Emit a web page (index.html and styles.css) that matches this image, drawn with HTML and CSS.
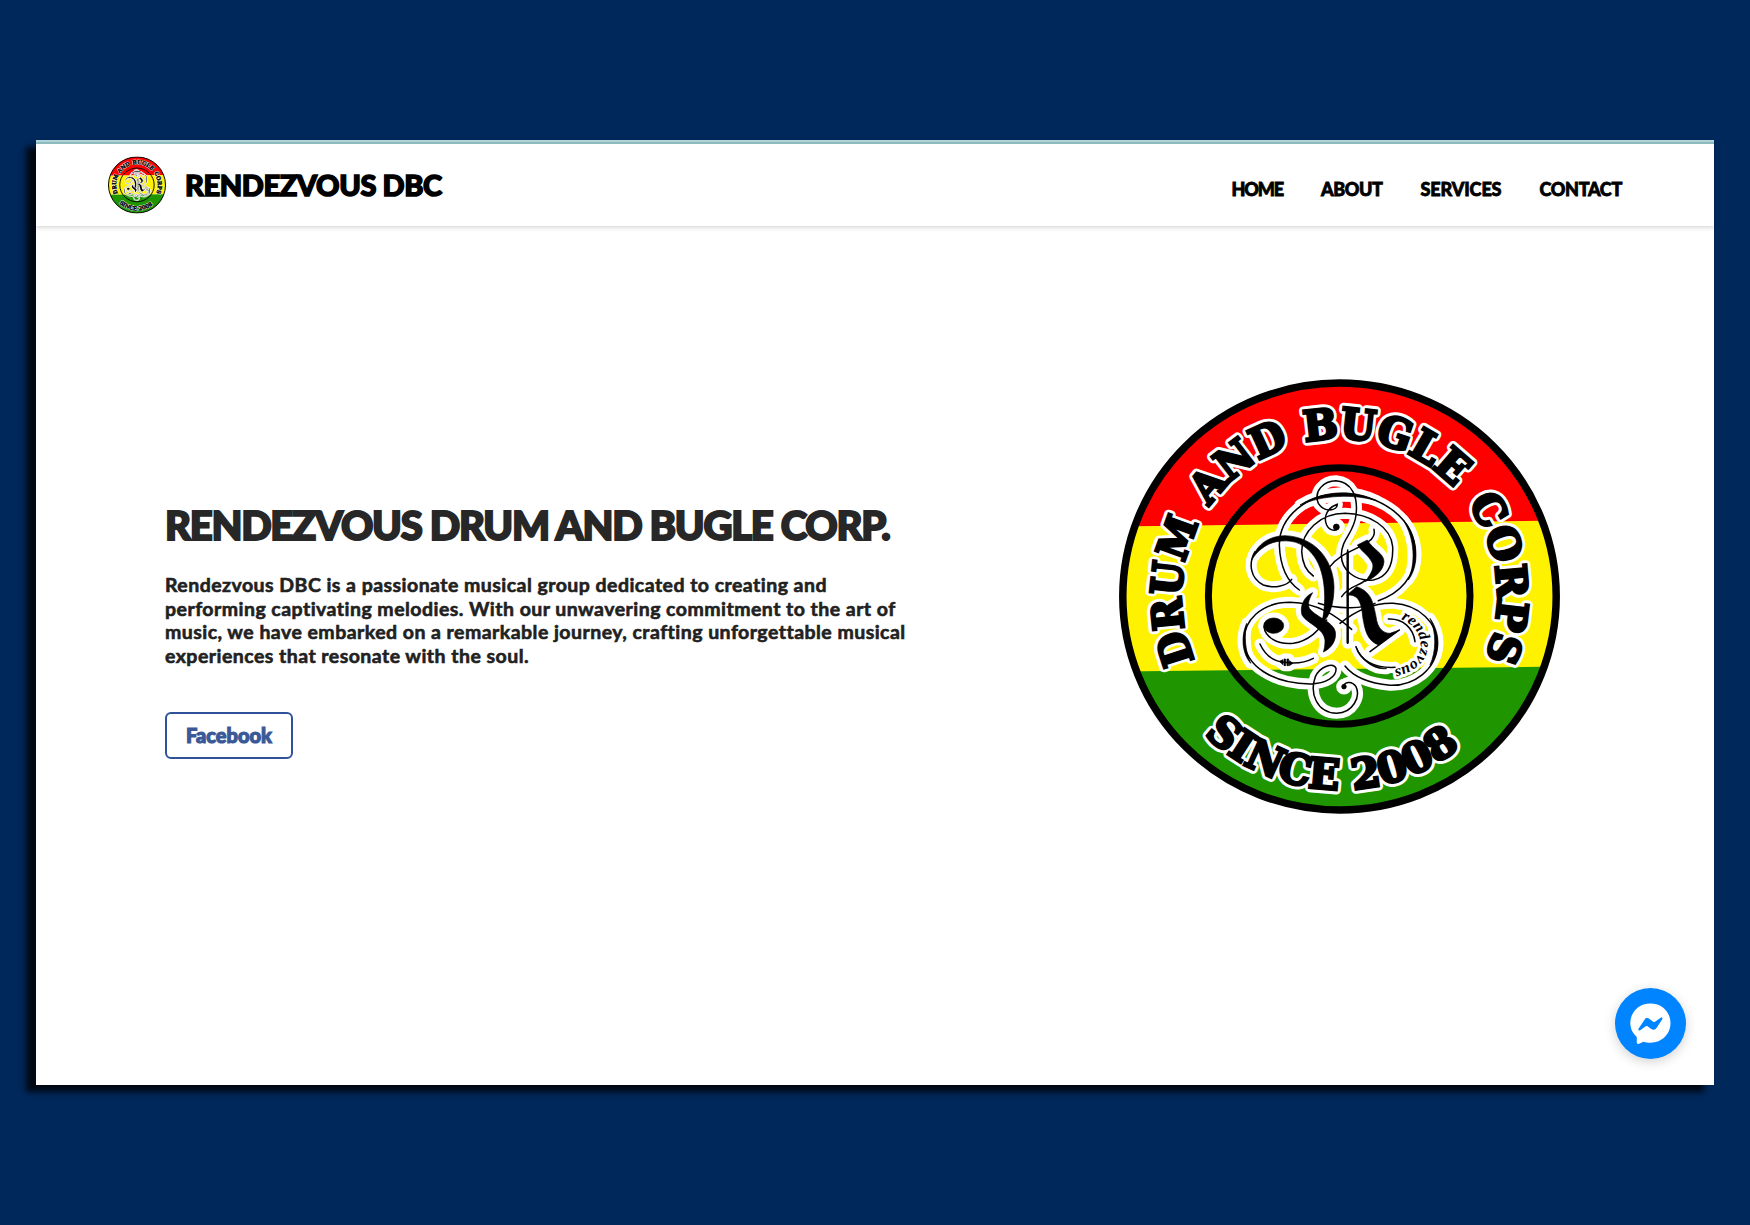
FILE: index.html
```html
<!DOCTYPE html>
<html lang="en">
<head>
<meta charset="utf-8">
<title>Rendezvous DBC</title>
<link rel="stylesheet" href="styles.css">
</head>
<body>
<svg class="defs" aria-hidden="true">
  <defs>
    <g id="lines">
      <path d="M322 166 C330 186 300 186 290 165 C278 138 295 112 322 103 C322 122 285 130 265 100 C250 65 280 32 318 32 C365 35 385 80 378 135 C372 190 335 205 334 255 C334 300 375 335 430 330 C475 320 490 280 488 230 C482 170 420 132 345 130 C270 130 215 185 215 245 C217 280 230 305 250 318"/>
      <path d="M208 360 C165 330 150 280 148 225 C148 140 230 72 330 72 C460 72 556 150 556 250 C556 320 510 370 445 392"/>
      <path d="M185 328 C170 350 130 355 100 345 C60 325 55 280 75 245"/>
      <path d="M102 470 C105 500 140 525 190 520 C240 512 265 480 290 450"/>
      <path d="M365 478 C320 440 270 400 180 397 C90 397 42 455 42 510 C45 590 130 640 240 642 C290 640 320 620 318 595 C310 575 270 590 256 620 C238 670 260 728 320 730 C370 728 392 680 378 650 C365 630 340 635 340 655"/>
      <path d="M330 460 C380 420 430 398 490 400 C570 405 622 460 622 520 C622 600 550 648 480 646 C420 640 370 620 345 588"/>
      <path d="M475 447 C520 445 550 475 555 515"/>
      <path d="M378 530 C390 570 430 595 495 592"/>
      <path d="M90 522 C105 555 130 575 165 577 C200 582 225 578 250 565"/>
      <path d="M300 290 C330 250 380 240 415 215 C430 205 435 190 432 178 M335 380 C360 345 385 350 405 332 M508 480 L420 545 M265 400 C330 420 400 415 435 400 M353 240 V520"/>
    </g>
    <g id="strokes">
      <path d="M65 270 C80 220 120 198 165 197 C255 200 310 270 312 350 C312 400 300 440 275 460 C290 400 290 300 245 250 C215 215 180 208 140 215 C105 222 80 245 65 270Z"/>
      <path d="M248 368 C225 378 208 405 216 435 C230 460 282 475 285 510 C285 530 282 540 280 546 C305 535 320 510 316 485 C310 455 255 440 238 415 C232 400 238 385 248 368Z"/>
      <path d="M382 225 L412 210 C430 240 462 250 462 275 C460 305 430 325 405 335 C425 310 435 290 425 275 C415 255 395 245 382 225Z"/>
      <path d="M350 376 L380 350 C425 365 430 400 438 440 C442 475 460 490 480 490 L508 480 L445 525 C410 510 405 480 398 440 C395 400 385 370 350 376Z"/>
      <ellipse cx="131" cy="467" rx="30" ry="23"/>
      <path d="M210 105 C280 60 370 58 440 92 C370 72 280 74 210 105Z M520 150 C570 210 566 290 535 330 C556 280 556 210 520 150Z M50 460 C32 500 36 550 62 580 C46 545 42 500 50 460Z M600 445 C632 490 632 550 600 585 C618 545 620 490 600 445Z M378 530 C392 570 430 600 470 596 C430 590 395 570 378 530Z"/>
      <path d="M162 567 h5 v20 h-5z M171 567 h5 v20 h-5z M148 574 l11 -5 v15z M189 580 l-11 -8 v15z"/>
      <circle cx="342" cy="650" r="7"/><circle cx="319" cy="171" r="9"/>
    </g>
    <path id="ring-upper" d="M75.950 281.300 A158 158 0 1 1 365.050 281.300"/>
    <path id="ring-lower" d="M81.200 351.400 A193.500 193.500 0 0 0 359.800 351.400"/>
    <path id="ring-small" d="M513 447 C555 465 574 500 572 530 C570 565 540 588 488 600"/>
    <clipPath id="disc"><ellipse cx="220.5" cy="217.5" rx="218" ry="215"/></clipPath>
    <g id="ring-words">
      <text textLength="142" lengthAdjust="spacingAndGlyphs"><textPath href="#ring-upper" startOffset="0">DRUM</textPath></text>
      <text textLength="102" lengthAdjust="spacingAndGlyphs"><textPath href="#ring-upper" startOffset="161">AND</textPath></text>
      <text textLength="163" lengthAdjust="spacingAndGlyphs"><textPath href="#ring-upper" startOffset="279">BUGLE</textPath></text>
      <text textLength="163" lengthAdjust="spacingAndGlyphs"><textPath href="#ring-upper" startOffset="462">CORPS</textPath></text>
      <text textLength="149" lengthAdjust="spacingAndGlyphs"><textPath href="#ring-lower" startOffset="5.500">SINCE</textPath></text>
      <text textLength="117" lengthAdjust="spacingAndGlyphs"><textPath href="#ring-lower" startOffset="169">2008</textPath></text>
    </g>
    <symbol id="emblem" viewBox="0 0 441 435">
      <g clip-path="url(#disc)">
        <path fill="#f00" d="M0 0H441V142L0 148Z"/>
        <path fill="#fff200" d="M0 147.500L441 141.500V288L0 293Z"/>
        <path fill="#1f9600" d="M0 292.500L441 287.500V435H0Z"/>
      </g>
      <ellipse cx="220.5" cy="217.5" rx="216.7" ry="213.4" fill="none" stroke="#000" stroke-width="7.5"/>
      <ellipse cx="220.2" cy="217" rx="130.8" ry="128.2" fill="none" stroke="#000" stroke-width="7"/>
      <use href="#ring-words" class="ring-text ring-halo"/>
      <use href="#ring-words" class="ring-text ring-ink"/>
      <g transform="translate(111 91) scale(.33333)">
        <g fill="none" stroke="#fff" stroke-width="33" stroke-linecap="round" stroke-linejoin="round">
          <use href="#lines"/><use href="#strokes" fill="#fff"/>
        </g>
        <text class="script-text script-halo" textLength="222" lengthAdjust="spacingAndGlyphs"><textPath href="#ring-small">rendezvous</textPath></text>
        <use href="#lines" fill="none" stroke="#000" stroke-width="4.5" stroke-linecap="round"/>
        <use href="#strokes" stroke="#000" stroke-width="2"/>
        <path d="M353 245V520" stroke="#000" stroke-width="7"/>
        <text class="script-text" textLength="222" lengthAdjust="spacingAndGlyphs"><textPath href="#ring-small">rendezvous</textPath></text>
      </g>
    </symbol>
  </defs>
</svg>

<div class="window">
  <header class="header">
    <a class="brand">
      <svg class="brand-logo" viewBox="0 0 441 435"><use href="#emblem"/></svg>
      <span class="brand-name">RENDEZVOUS DBC</span>
    </a>
    <nav class="nav">
      <a class="home">HOME</a>
      <a class="about">ABOUT</a>
      <a class="services">SERVICES</a>
      <a class="contact">CONTACT</a>
    </nav>
  </header>
  <main class="hero">
    <section class="intro">
      <h1 class="title">RENDEZVOUS DRUM AND BUGLE CORP.</h1>
      <p class="text">Rendezvous DBC is a passionate musical group dedicated to creating and<br>performing captivating melodies. With our unwavering commitment to the art of<br>music, we have embarked on a remarkable journey, crafting unforgettable musical<br>experiences that resonate with the soul.</p>
      <a class="button">Facebook</a>
    </section>
    <svg class="hero-logo" viewBox="0 0 441 435"><use href="#emblem"/></svg>
  </main>
  <a class="chat" aria-label="Messenger">
    <svg viewBox="0 0 71 71">
      <path fill="#fff" d="M35.500 15.500C24 15.500 15.300 24 15.300 35C15.300 40.500 17.700 45.500 21.800 49V54.500C21.800 55.800 22.800 56.300 24 55.700L28.500 53.700C30.500 54.500 33 54.700 35.500 54.700C47 54.700 55.500 46 55.500 35C55.500 24 47 15.500 35.500 15.500Z"/>
      <path fill="#0084ff" d="M23.500 40.800L29.500 31.700C31 29.700 33 29.800 34.500 30.900L38.200 33.700C38.800 34.100 39.300 34.100 40 33.700L45.700 29.800C47 29 48 30 47.300 31.200L41.500 40C40 42 38 42.200 36.300 41L32.500 38.200C32 37.800 31.500 37.800 30.800 38.200L25.200 42.200C24 43 22.800 42 23.500 40.800Z"/>
    </svg>
  </a>
</div>
</body>
</html>
```
FILE: styles.css
```css
* { box-sizing: border-box; }

body {
  margin: 0;
  height: 1225px;
  padding: 140px 36px;
  overflow: hidden;
  background: #00285b;
  font-family: Lato, "Open Sans", sans-serif;
  font-weight: 900;
}

.defs { position: absolute; width: 0; height: 0; }

.window {
  position: relative;
  width: 1678px;
  height: 945px;
  display: flex;
  flex-direction: column;
  background: #fff;
  border-top: 2px solid #b9dde2;
  box-shadow: -10px 7px 6px #000813;
}

.header {
  height: 84px;
  display: flex;
  align-items: center;
  justify-content: space-between;
  padding: 0 92px 0 72px;
  border-top: 2px solid #8dbabd;
  box-shadow: 0 1px 5px rgba(0, 0, 0, .2);
}

.brand { display: flex; align-items: center; gap: 19px; }
.brand-logo { width: 58px; height: 58px; }

.brand-name {
  padding-bottom: 2px;
  font-size: 29px;
  letter-spacing: -.4px;
  color: #000;
  -webkit-text-stroke: 1.5px #000;
}

.nav {
  display: flex;
  gap: 38px;
  padding-top: 8px;
  font-size: 18px;
  letter-spacing: -.3px;
  color: #000;
  -webkit-text-stroke: .8px #000;
}

.home { letter-spacing: -1.1px; }
.about { letter-spacing: -.4px; }
.services { letter-spacing: -.1px; }

.hero {
  flex: 1;
  display: flex;
  align-items: flex-start;
  justify-content: space-between;
  padding: 153px 154px 0 129px;
}

.intro { padding-top: 122px; color: #272727; }

.title {
  margin: 0;
  font-size: 40px;
  line-height: 48px;
  font-weight: 900;
  letter-spacing: -1.25px;
  white-space: nowrap;
  -webkit-text-stroke: 2px #272727;
}

.text {
  margin: 24px 0 0;
  font-size: 19.5px;
  line-height: 23.7px;
  font-weight: 700;
  letter-spacing: .46px;
  white-space: nowrap;
  color: #212121;
  -webkit-text-stroke: .6px #212121;
}

.button {
  display: flex;
  align-items: center;
  justify-content: center;
  width: 128px;
  height: 47px;
  margin-top: 44px;
  border: 2px solid #2f529b;
  border-radius: 6px;
  font-size: 20px;
  color: #3b5998;
  -webkit-text-stroke: 1.1px #3b5998;
}

.hero-logo { flex: none; width: 441px; height: 435px; }

.ring-text {
  font: bold 42px "DejaVu Serif", serif;
  stroke-linejoin: round;
}

.ring-halo { fill: #fff; stroke: #fff; stroke-width: 9px; }
.ring-ink { fill: #000; stroke: #000; stroke-width: 3px; stroke-linejoin: miter; }

.script-text { font: italic bold 46px "Liberation Serif", serif; fill: #000; }
.script-halo { stroke: #fff; stroke-width: 18px; stroke-linejoin: round; }

.chat {
  position: absolute;
  right: 28px;
  bottom: 26px;
  width: 71px;
  height: 71px;
  border-radius: 50%;
  background: #0084ff;
  box-shadow: 0 3px 12px rgba(0, 0, 0, .18);
}
```
